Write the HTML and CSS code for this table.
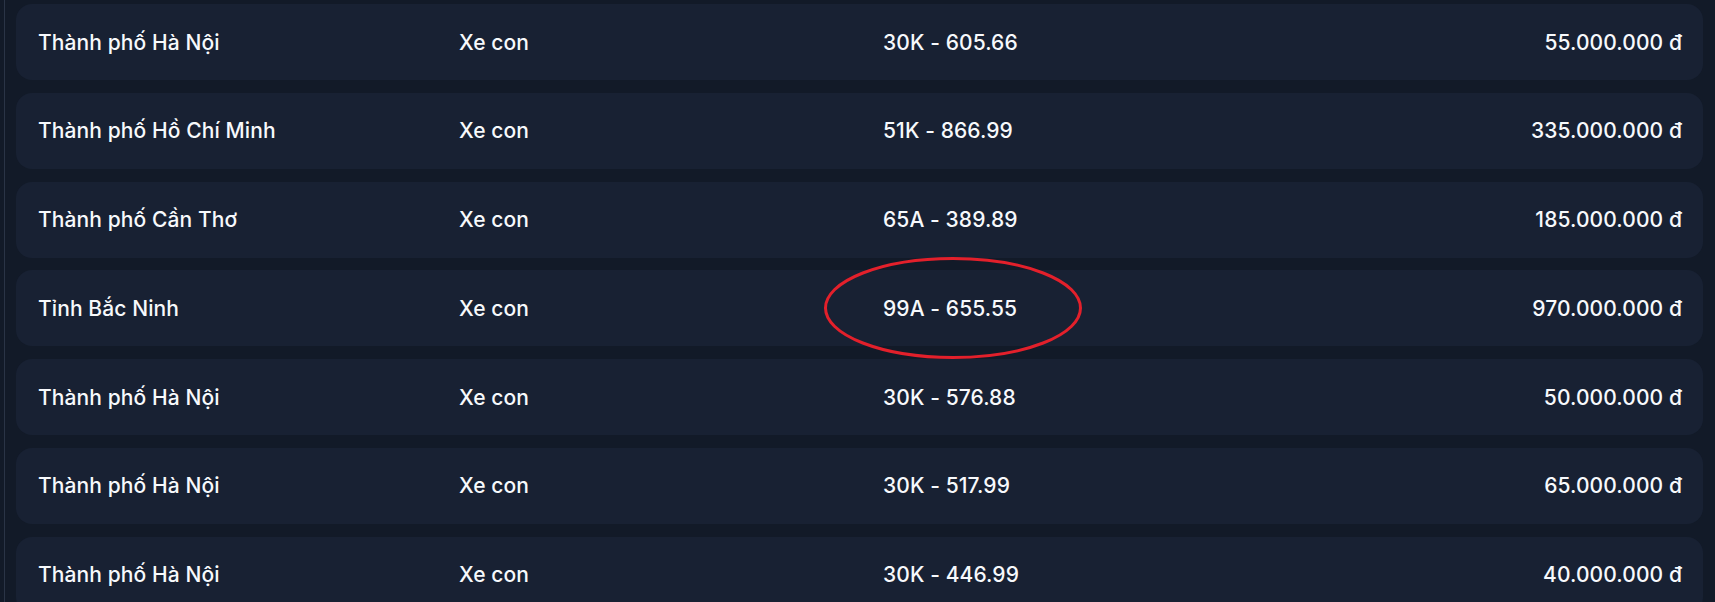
FILE: index.html
```html
<!DOCTYPE html>
<html lang="vi">
<head>
<meta charset="utf-8">
<title>Biển số</title>
<link rel="stylesheet" href="styles.css">
</head>
<body>
<div class="wrap">
  <div class="list">
    <div class="row"><span>Thành phố Hà Nội</span><span>Xe con</span><span>30K - 605.66</span><span class="price">55.000.000 đ</span></div>
    <div class="row"><span>Thành phố Hồ Chí Minh</span><span>Xe con</span><span>51K - 866.99</span><span class="price">335.000.000 đ</span></div>
    <div class="row"><span>Thành phố Cần Thơ</span><span>Xe con</span><span>65A - 389.89</span><span class="price">185.000.000 đ</span></div>
    <div class="row"><span>Tỉnh Bắc Ninh</span><span>Xe con</span><span>99A - 655.55</span><span class="price">970.000.000 đ</span></div>
    <div class="row"><span>Thành phố Hà Nội</span><span>Xe con</span><span>30K - 576.88</span><span class="price">50.000.000 đ</span></div>
    <div class="row"><span>Thành phố Hà Nội</span><span>Xe con</span><span>30K - 517.99</span><span class="price">65.000.000 đ</span></div>
    <div class="row"><span>Thành phố Hà Nội</span><span>Xe con</span><span>30K - 446.99</span><span class="price">40.000.000 đ</span></div>
  </div>
</div>
<svg class="mark" width="262" height="106" viewBox="0 0 262 106">
  <ellipse cx="131" cy="53" rx="127.5" ry="49.5" fill="none" stroke="#e3202b" stroke-width="3"/>
</svg>
</body>
</html>
```
FILE: styles.css
```css
html, body {
  margin: 0;
  padding: 0;
  background: #121a28;
  overflow: hidden;
}
body {
  font-family: Inter, "Noto Sans", sans-serif;
  color: #f7f9fc;
  height: 602px;
}
.wrap {
  margin-left: 4px;
  border-left: 1px solid #2a3446;
  height: 602px;
  padding: 4px 12px 0 11px;
}
.list {
  display: flex;
  flex-direction: column;
  gap: 12.8px;
}
.row {
  height: 76px;
  flex: none;
  background: #182133;
  border-radius: 16px;
  display: grid;
  grid-template-columns: 421px 424px 1fr 1fr;
  align-items: center;
  padding: 0 21px 0 22px;
  font-size: 21px;
  font-weight: 450;
  letter-spacing: 0.1px;
}
.price {
  text-align: right;
}
.mark {
  position: absolute;
  left: 822px;
  top: 255px;
}
```
